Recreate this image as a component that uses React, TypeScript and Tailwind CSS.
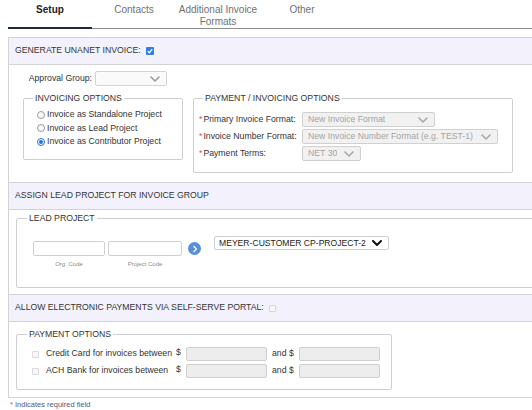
import React from "react";

const Chevron = ({ color = "#9a9a9a", w = 10, sw = 1.6 }: { color?: string; w?: number; sw?: number }) => (
  <svg width={w} height={6} viewBox="0 0 10 6" className="shrink-0">
    <polyline points="1,1 5,5 9,1" fill="none" stroke={color} strokeWidth={sw} strokeLinecap="round" strokeLinejoin="round" />
  </svg>
);

const Star = () => <span className="text-[#d9534f] mr-[1px]">*</span>;

function DisabledSelect({ text, w }: { text: string; w: string }) {
  return (
    <div className={`${w} h-[15px] bg-[#f1f1f1] border border-[#d0d0d0] rounded-[2px] flex items-center justify-between pl-[5px] pr-[6px] text-[#a4a4a4]`}>
      <span className="truncate">{text}</span>
      <Chevron color="#a8a8a8" />
    </div>
  );
}

function Radio({ checked }: { checked?: boolean }) {
  return checked ? (
    <span className="w-[8px] h-[8px] rounded-full border border-[#2a6fd6] bg-white flex items-center justify-center shrink-0">
      <span className="w-[4px] h-[4px] rounded-full bg-[#1a73e8]" />
    </span>
  ) : (
    <span className="w-[8px] h-[8px] rounded-full border border-[#9a9a9a] bg-[#fafafa] shrink-0" />
  );
}

export default function App() {
  return (
    <div className="w-[532px] h-[410px] bg-white overflow-hidden font-['Liberation_Sans',Arial,sans-serif] text-[8.7px] text-[#333] whitespace-nowrap">
      {/* Tabs */}
      <div className="ml-[8px] flex h-[29px] border-b border-[#8c8c8c] text-[10px] leading-[12px]">
        <div className="w-[84px] pt-[4px] text-center font-bold text-[#222] border-b-2 border-[#1e2a45] -mb-px">Setup</div>
        <div className="w-[84px] pt-[4px] text-center text-[#707070]">Contacts</div>
        <div className="w-[84px] pt-[4px] text-center text-[#707070]">Additional Invoice<br />Formats</div>
        <div className="w-[84px] pt-[4px] text-center text-[#707070]">Other</div>
      </div>

      <div className="ml-[8px] mt-[8px] border-l border-[#d3d3d3]">
        {/* Section 1 header */}
        <div className="h-[28px] bg-[#f3f2fc] border-y border-[#d3d3d3] flex items-center pl-[6px] gap-[5px]">
          <span>GENERATE UNANET INVOICE:</span>
          <span className="w-[8px] h-[8px] rounded-[1px] bg-[#2f7fe6] flex items-center justify-center">
            <svg width="6" height="6" viewBox="0 0 6 6">
              <polyline points="0.8,3.2 2.4,4.7 5.2,1.2" fill="none" stroke="white" strokeWidth="1.3" />
            </svg>
          </span>
        </div>
        {/* Section 1 body */}
        <div className="h-[117px] pt-[6px]">
          <div className="flex items-center">
            <span className="w-[86px] text-right pr-[3px]">Approval Group:</span>
            <div className="w-[72px] h-[15px] bg-[#fafafa] border border-[#d3d3d3] rounded-[2px] flex items-center justify-end pr-[6px]">
              <Chevron color="#9a9a9a" />
            </div>
          </div>
          <div className="flex items-start ml-[14px] mt-[7px] gap-[10px]">
            <fieldset className="w-[160px] border border-[#cfcfcf] rounded-[2px] pl-[13px] pt-[4px] pb-[10px]">
              <legend className="-ml-[4px] px-[2px] leading-[11px]">INVOICING OPTIONS</legend>
              <div className="flex flex-col">
                <label className="flex items-center h-[13.5px] gap-[2px]"><Radio /><span>Invoice as Standalone Project</span></label>
                <label className="flex items-center h-[13.5px] gap-[2px]"><Radio /><span>Invoice as Lead Project</span></label>
                <label className="flex items-center h-[13.5px] gap-[2px]"><Radio checked /><span>Invoice as Contributor Project</span></label>
              </div>
            </fieldset>
            <fieldset className="w-[320px] border border-[#cfcfcf] rounded-[2px] pl-[5px] pt-[8px] pb-[11px]">
              <legend className="ml-[4px] px-[2px] leading-[11px]">PAYMENT / INVOICING OPTIONS</legend>
              <div className="flex flex-col gap-[2px]">
                <div className="flex items-center">
                  <span className="w-[103px]"><Star />Primary Invoice Format:</span>
                  <DisabledSelect text="New Invoice Format" w="w-[133px]" />
                </div>
                <div className="flex items-center">
                  <span className="w-[103px]"><Star />Invoice Number Format:</span>
                  <DisabledSelect text="New Invoice Number Format (e.g. TEST-1)" w="w-[196px]" />
                </div>
                <div className="flex items-center">
                  <span className="w-[103px]"><Star />Payment Terms:</span>
                  <DisabledSelect text="NET 30" w="w-[59px]" />
                </div>
              </div>
            </fieldset>
          </div>
        </div>

        {/* Section 2 header */}
        <div className="h-[28px] bg-[#f3f2fc] border-y border-[#d3d3d3] flex items-center pl-[6px]">
          ASSIGN LEAD PROJECT FOR INVOICE GROUP
        </div>
        {/* Section 2 body */}
        <div className="h-[84px] pt-[3px] pl-[7px]">
          <fieldset className="w-[530px] h-[75px] border border-[#cfcfcf] rounded-[2px] pl-[16px] pt-[12px]">
            <legend className="-ml-[6px] px-[2px] leading-[11px]">LEAD PROJECT</legend>
            <div className="flex items-start">
              <div className="mt-[5px] flex flex-col">
                <div className="flex items-center">
                  <div className="w-[72px] h-[15px] bg-white border border-[#d0d0d0] rounded-[2px]" />
                  <div className="ml-[3px] w-[74px] h-[15px] bg-white border border-[#d0d0d0] rounded-[2px]" />
                  <span className="ml-[6px] w-[13px] h-[13px] rounded-full bg-[#5b8ed8] flex items-center justify-center">
                    <svg width="6" height="8" viewBox="0 0 6 8">
                      <polyline points="1.5,1 4.5,4 1.5,7" fill="none" stroke="white" strokeWidth="1.2" />
                    </svg>
                  </span>
                </div>
                <div className="flex text-[6px] text-[#8a8a8a] mt-[4px] leading-[8px]">
                  <span className="w-[72px] text-center">Org. Code</span>
                  <span className="ml-[3px] w-[74px] text-center">Project Code</span>
                </div>
              </div>
              <div className="ml-[13px] w-[175px] h-[14px] bg-white border border-[#cfcfcf] rounded-[2px] flex items-center justify-between pl-[4px] pr-[6px] text-[#222] text-[8.6px]">
                <span>MEYER-CUSTOMER CP-PROJECT-2</span>
                <Chevron color="#111" sw={2} />
              </div>
            </div>
          </fieldset>
        </div>

        {/* Section 3 header */}
        <div className="h-[28px] bg-[#f3f2fc] border-y border-[#d3d3d3] flex items-center pl-[6px] gap-[5px]">
          <span>ALLOW ELECTRONIC PAYMENTS VIA SELF-SERVE PORTAL:</span>
          <span className="w-[7px] h-[7px] rounded-[1px] border border-[#d6d6d6] bg-[#f7f7f7]" />
        </div>
        {/* Section 3 body */}
        <div className="h-[76px] pt-[7px] pl-[7px] border-b border-[#d3d3d3]">
          <fieldset className="w-[376px] h-[61px] border border-[#cfcfcf] rounded-[2px] pl-[15px] pt-[7px]">
            <legend className="-ml-[5px] px-[2px] leading-[11px]">PAYMENT OPTIONS</legend>
            <div className="flex flex-col gap-[3px]">
              {["Credit Card for invoices between", "ACH Bank for invoices between"].map((t) => (
                <div key={t} className="flex items-center h-[14px]">
                  <span className="w-[7px] h-[7px] rounded-[1px] border border-[#dadada] bg-[#f7f7f7] shrink-0" />
                  <span className="ml-[7px] w-[130px]">{t}</span>
                  <span className="w-[10px] self-start -mt-[1px]">$</span>
                  <div className="w-[81px] h-[14px] bg-[#ededed] border border-[#cfcfcf] rounded-[2px]" />
                  <span className="ml-[5px] w-[27px]">and $</span>
                  <div className="w-[81px] h-[14px] bg-[#ededed] border border-[#cfcfcf] rounded-[2px]" />
                </div>
              ))}
            </div>
          </fieldset>
        </div>
      </div>

      <div className="pl-[10px] pt-[1px] text-[7.5px] text-[#55597a]">
        <span className="text-[#d9534f]">*</span> Indicates required field
      </div>
    </div>
  );
}
